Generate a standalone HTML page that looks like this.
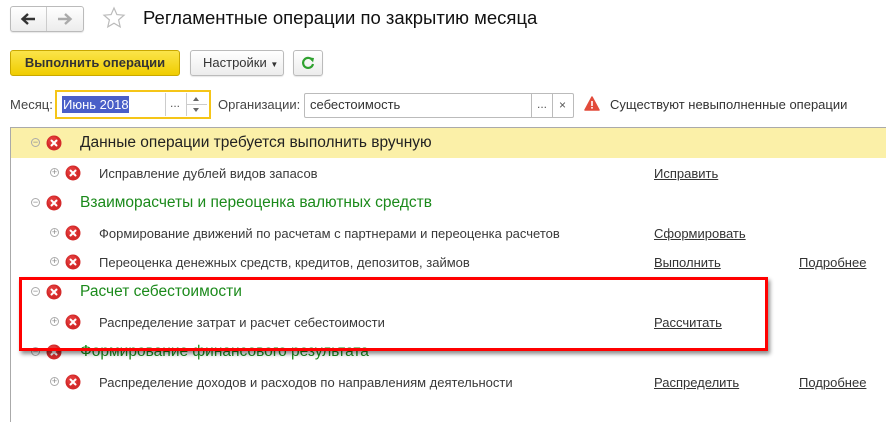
<!DOCTYPE html>
<html><head><meta charset="utf-8"><style>
*{margin:0;padding:0;box-sizing:border-box}
body{width:886px;height:422px;background:#fff;font-family:"Liberation Sans",Arial,sans-serif;position:relative;overflow:hidden;color:#333}
.a{position:absolute}
.btn{position:absolute;border:1px solid #bbb;border-radius:3px;background:linear-gradient(#fff,#ececec);box-shadow:0 1px 1px rgba(0,0,0,.1)}
.grp{position:absolute;left:80px;font-size:15.5px;color:#1b8a1b}
.it{position:absolute;left:99px;font-size:13px;color:#3a3a3a}
.lnk{position:absolute;font-size:13px;color:#333;text-decoration:underline}
.x{position:absolute;width:16px;height:16px}
.pm{position:absolute;width:9px;height:9px;border:1px solid #aaa;border-radius:50%;color:#888;font-size:9px;line-height:7px;text-align:center}
</style></head><body>
<svg width="0" height="0" style="position:absolute"><defs><g id="xi"><circle cx="8" cy="8" r="7.5" fill="#d42a2a"/><circle cx="7" cy="6.5" r="5" fill="#ea4545" opacity=".6"/><path d="M5.5 5.5l5 5M10.5 5.5l-5 5" stroke="#fff" stroke-width="2" stroke-linecap="round"/></g></defs></svg>
<div class="btn" style="left:10px;top:6px;width:74px;height:26px"></div>
<div class="a" style="left:46px;top:7px;width:1px;height:24px;background:#ccc"></div>
<svg class="a" style="left:19px;top:11px" width="18" height="16" viewBox="0 0 18 16"><path d="M16 8H4M9 3L3.5 8 9 13" fill="none" stroke="#333" stroke-width="2.4"/></svg>
<svg class="a" style="left:56px;top:11px" width="18" height="16" viewBox="0 0 18 16"><path d="M2 8h12M9 3l5.5 5L9 13" fill="none" stroke="#aaa" stroke-width="2.4"/></svg>
<svg class="a" style="left:102px;top:6px" width="24" height="24" viewBox="0 0 24 24"><path d="M12 2l2.9 6.6 7.1.6-5.4 4.7 1.6 7-6.2-3.7-6.2 3.7 1.6-7L2 9.2l7.1-.6z" fill="none" stroke="#bbb" stroke-width="1.2"/></svg>
<div class="a" style="left:143px;top:7px;font-size:18.5px;color:#111">Регламентные операции по закрытию месяца</div>

<div class="a" style="left:10px;top:50px;width:170px;height:26px;border:1px solid #c9a800;border-radius:3px;background:linear-gradient(#fbe54a,#f0cd00);font-size:13px;font-weight:bold;color:#333;text-align:center;line-height:24px">Выполнить операции</div>
<div class="btn" style="left:190px;top:50px;width:94px;height:26px;font-size:13px;line-height:24px;padding-left:12px">Настройки <span style="font-size:8px">▼</span></div>
<div class="btn" style="left:293px;top:50px;width:30px;height:26px"></div>
<svg class="a" style="left:300px;top:55px" width="16" height="16" viewBox="0 0 16 16"><path d="M12.5 5.5A5 5 0 1 0 13 9" fill="none" stroke="#2fa12f" stroke-width="2.2"/><path d="M9.5 2.5l4.5 0.5-1 4.5z" fill="#2fa12f"/></svg>

<div class="a" style="left:10px;top:97px;font-size:13px;color:#444">Месяц:</div>
<div class="a" style="left:55px;top:90px;width:156px;height:29px;border:2px solid #f5c518;background:#fff"></div>
<div class="a" style="left:62px;top:96px;height:17px;width:67px;background:#4a5fc8;color:#fff;font-size:13px;line-height:17px;padding-left:1px">Июнь 2018</div>
<div class="a" style="left:165px;top:93px;width:1px;height:23px;background:#ccc"></div>
<div class="a" style="left:170px;top:96px;font-size:12px;color:#555">...</div>
<div class="a" style="left:186px;top:93px;width:1px;height:23px;background:#ccc"></div>
<div class="a" style="left:187px;top:104px;width:20px;height:1px;background:#ccc"></div>
<svg class="a" style="left:193px;top:97px" width="6" height="4"><path d="M0 4L3 0 6 4z" fill="#666"/></svg>
<svg class="a" style="left:193px;top:108px" width="6" height="4"><path d="M0 0L3 4 6 0z" fill="#666"/></svg>

<div class="a" style="left:218px;top:97px;font-size:13px;color:#444">Организации:</div>
<div class="a" style="left:304px;top:93px;width:270px;height:25px;border:1px solid #bbb;border-radius:2px"></div>
<div class="a" style="left:310px;top:97px;font-size:13px;color:#333">себестоимость</div>
<div class="a" style="left:531px;top:94px;width:1px;height:23px;background:#bbb"></div>
<div class="a" style="left:552px;top:94px;width:1px;height:23px;background:#bbb"></div>
<div class="a" style="left:537px;top:97px;font-size:12px;color:#555">...</div>
<div class="a" style="left:559px;top:98px;font-size:12px;color:#555">×</div>
<svg class="a" style="left:584px;top:96px" width="16" height="15" viewBox="0 0 16 15"><path d="M8 1L15 14H1z" fill="#e24b3b" stroke="#e24b3b" stroke-linejoin="round" stroke-width="1.5"/><rect x="7.2" y="5" width="1.6" height="5" fill="#fff"/><rect x="7.2" y="11" width="1.6" height="1.6" fill="#fff"/></svg>
<div class="a" style="left:610px;top:97px;font-size:13px;color:#333">Существуют невыполненные операции</div>

<div class="a" style="left:10px;top:127px;width:876px;height:1px;background:#aaa"></div>
<div class="a" style="left:10px;top:127px;width:1px;height:295px;background:#aaa"></div>
<div class="a" style="left:11px;top:128px;width:875px;height:30px;background:#fbf0a8"></div>

<div class="pm" style="left:31px;top:138px">−</div><svg class="x" style="left:46px;top:135px"><use href="#xi"/></svg>
<div class="grp" style="top:134px;color:#222">Данные операции требуется выполнить вручную</div>
<div class="pm" style="left:50px;top:168px">+</div><svg class="x" style="left:65px;top:165px"><use href="#xi"/></svg>
<div class="it" style="top:166px">Исправление дублей видов запасов</div>
<div class="lnk" style="left:654px;top:166px">Исправить</div>

<div class="pm" style="left:31px;top:198px">−</div><svg class="x" style="left:46px;top:195px"><use href="#xi"/></svg>
<div class="grp" style="top:194px">Взаиморасчеты и переоценка валютных средств</div>
<div class="pm" style="left:50px;top:228px">+</div><svg class="x" style="left:65px;top:225px"><use href="#xi"/></svg>
<div class="it" style="top:226px">Формирование движений по расчетам с партнерами и переоценка расчетов</div>
<div class="lnk" style="left:654px;top:226px">Сформировать</div>
<div class="pm" style="left:50px;top:257px">+</div><svg class="x" style="left:65px;top:254px"><use href="#xi"/></svg>
<div class="it" style="top:255px">Переоценка денежных средств, кредитов, депозитов, займов</div>
<div class="lnk" style="left:654px;top:255px">Выполнить</div>
<div class="lnk" style="left:799px;top:255px">Подробнее</div>

<div class="pm" style="left:31px;top:287px">−</div><svg class="x" style="left:46px;top:284px"><use href="#xi"/></svg>
<div class="grp" style="top:283px">Расчет себестоимости</div>
<div class="pm" style="left:50px;top:317px">+</div><svg class="x" style="left:65px;top:314px"><use href="#xi"/></svg>
<div class="it" style="top:315px">Распределение затрат и расчет себестоимости</div>
<div class="lnk" style="left:654px;top:315px">Рассчитать</div>

<div class="pm" style="left:31px;top:347px">−</div><svg class="x" style="left:46px;top:344px"><use href="#xi"/></svg>
<div class="grp" style="top:343px">Формирование финансового результата</div>
<div class="pm" style="left:50px;top:377px">+</div><svg class="x" style="left:65px;top:374px"><use href="#xi"/></svg>
<div class="it" style="top:375px">Распределение доходов и расходов по направлениям деятельности</div>
<div class="lnk" style="left:654px;top:375px">Распределить</div>
<div class="lnk" style="left:799px;top:375px">Подробнее</div>

<div class="a" style="left:19px;top:277px;width:749px;height:74px;border:3px solid #f00;box-shadow:2px 3px 4px rgba(0,0,0,.45)"></div>
</body></html>
